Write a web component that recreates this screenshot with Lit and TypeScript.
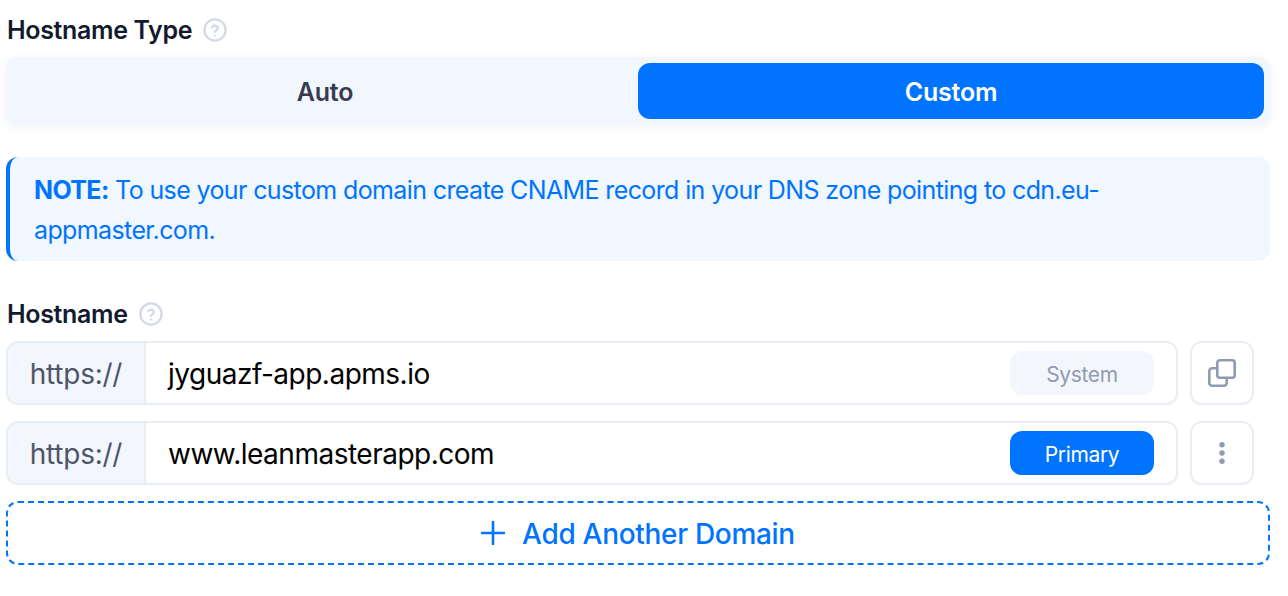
import { LitElement, css, html } from "lit";
import { customElement } from "lit/decorators.js";

const helpIcon = html`
  <svg class="help" viewBox="0 0 24 24" fill="none" stroke="#d3d9e6" stroke-width="2.3" stroke-linecap="round">
    <circle cx="12" cy="12" r="10.6"></circle>
    <path d="M9.2 9.4a2.9 2.9 0 0 1 5.6.8c0 1.8-2.8 2.2-2.8 3.8"></path>
    <circle cx="12" cy="17.4" r="0.7" fill="#d3d9e6" stroke-width="1"></circle>
  </svg>
`;

const copyIcon = html`
  <svg class="icon" viewBox="0 0 28 28" fill="none" stroke="#8f9bb3" stroke-width="2.6" stroke-linejoin="round">
    <rect x="9.3" y="1.3" width="17.4" height="17.4" rx="2.5"></rect>
    <path d="M9.3 9.3H4a2.7 2.7 0 0 0-2.7 2.7v12A2.7 2.7 0 0 0 4 26.7h12a2.7 2.7 0 0 0 2.7-2.7v-5.3"></path>
  </svg>
`;

const dotsIcon = html`
  <svg class="icon" viewBox="0 0 28 28" fill="#8f9bb3">
    <circle cx="14" cy="5.7" r="2.7"></circle>
    <circle cx="14" cy="14" r="2.7"></circle>
    <circle cx="14" cy="22.3" r="2.7"></circle>
  </svg>
`;

@customElement("app-root")
export class AppRoot extends LitElement {
  static styles = css`
    :host {
      display: block;
      font-family: Inter, "Liberation Sans", sans-serif;
      background: #fff;
      height: 596px;
      box-sizing: border-box;
      padding: 12px 18px 0 6px;
      color: #141a2e;
    }
    .label {
      display: flex;
      align-items: center;
      gap: 11px;
      height: 36px;
      padding-left: 1px;
      font-size: 25px;
      letter-spacing: -0.35px;
      font-weight: 600;
    }
    .help {
      width: 24px;
      height: 24px;
    }
    .segmented {
      display: flex;
      margin-top: 9px;
      height: 68px;
      box-sizing: border-box;
      padding: 6px;
      border-radius: 12px;
      background: #f2f6fe;
      box-shadow: 0 2px 8px rgba(143, 155, 179, 0.14);
    }
    .segment {
      flex: 1;
      display: flex;
      align-items: center;
      justify-content: center;
      box-sizing: border-box;
      padding-top: 2px;
      border-radius: 12px;
      font-size: 25px;
      letter-spacing: -0.2px;
      font-weight: 600;
      color: #373b4d;
    }
    .segment.active {
      background: #0073ff;
      color: #fff;
    }
    .note {
      margin-top: 32px;
      box-sizing: border-box;
      height: 104px;
      padding: 13px 24px 11px 24px;
      border-left: 4px solid #0073ff;
      border-radius: 12px;
      background: #f0f7ff;
      color: #0073ff;
      font-size: 25px;
      letter-spacing: -0.62px;
      line-height: 40px;
    }
    .note b {
      font-weight: 700;
    }
    .hostname-label {
      margin-top: 35px;
    }
    .rows {
      display: flex;
      flex-direction: column;
      gap: 16px;
      margin-top: 9px;
    }
    .row {
      display: flex;
      gap: 12px;
      height: 64px;
    }
    .field {
      flex: 1;
      display: flex;
      align-items: center;
      box-sizing: border-box;
      border: 2px solid #e9edf5;
      border-radius: 12px;
      overflow: hidden;
    }
    .prefix {
      display: flex;
      align-items: center;
      justify-content: center;
      align-self: stretch;
      box-sizing: border-box;
      width: 138px;
      padding-top: 1px;
      border-right: 2px solid #e9edf5;
      background: #f3f6fd;
      color: #4e5568;
      font-size: 28px;
      letter-spacing: -0.25px;
    }
    .value {
      flex: 1;
      padding: 2px 0 0 22px;
      font-size: 28px;
      letter-spacing: -0.5px;
      color: #000;
    }
    .tag {
      display: flex;
      align-items: center;
      justify-content: center;
      width: 144px;
      height: 44px;
      margin-right: 22px;
      padding-top: 2px;
      box-sizing: border-box;
      border-radius: 12px;
      font-size: 21px;
      letter-spacing: -0.35px;
    }
    .tag.system {
      background: #f3f6fd;
      color: #8f9bb3;
    }
    .tag.primary {
      background: #0073ff;
      color: #fff;
    }
    .action {
      display: flex;
      align-items: center;
      justify-content: center;
      box-sizing: border-box;
      width: 64px;
      margin-right: 16px;
      border: 2px solid #e9edf5;
      border-radius: 12px;
    }
    .icon {
      width: 28px;
      height: 28px;
    }
    .add {
      display: flex;
      align-items: center;
      justify-content: center;
      gap: 17px;
      height: 64px;
      box-sizing: border-box;
      padding-top: 2px;
      border: 2px dashed #0073ff;
      border-radius: 12px;
      color: #0073ff;
      font-size: 28px;
      letter-spacing: -0.3px;
      font-weight: 500;
    }
    .add svg {
      width: 24px;
      height: 24px;
      margin-top: -2px;
    }
  `;

  render() {
    return html`
      <div class="label">Hostname Type ${helpIcon}</div>
      <div class="segmented">
        <div class="segment">Auto</div>
        <div class="segment active">Custom</div>
      </div>
      <div class="note">
        <b>NOTE:</b> To use your custom domain create CNAME record in your DNS zone pointing to cdn.eu-appmaster.com.
      </div>
      <div class="label hostname-label">Hostname ${helpIcon}</div>
      <div class="rows">
        <div class="row">
          <div class="field">
            <div class="prefix">https://</div>
            <div class="value">jyguazf-app.apms.io</div>
            <div class="tag system">System</div>
          </div>
          <div class="action">${copyIcon}</div>
        </div>
        <div class="row">
          <div class="field">
            <div class="prefix">https://</div>
            <div class="value">www.leanmasterapp.com</div>
            <div class="tag primary">Primary</div>
          </div>
          <div class="action">${dotsIcon}</div>
        </div>
        <div class="add">
          <svg viewBox="0 0 24 24" fill="none" stroke="#0073ff" stroke-width="2.6" stroke-linecap="round">
            <path d="M12 1v22M1 12h22"></path>
          </svg>
          Add Another Domain
        </div>
      </div>
    `;
  }
}
